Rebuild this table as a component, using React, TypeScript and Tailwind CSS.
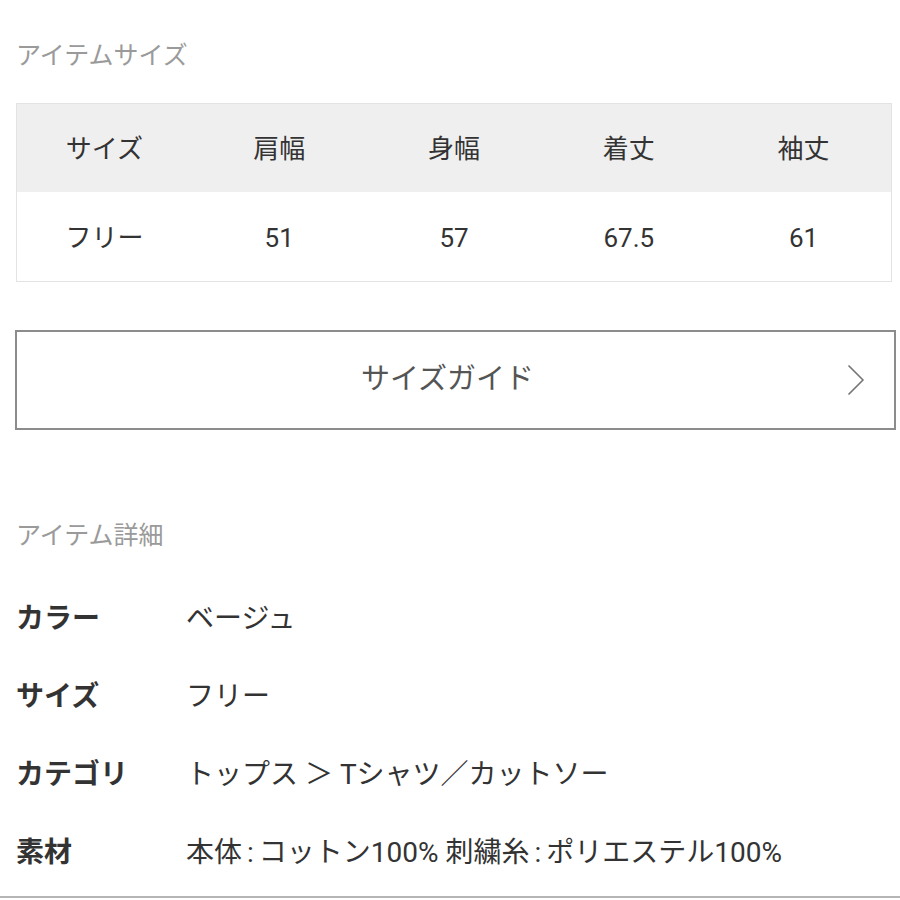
import { ChevronRight } from "lucide-react";
import type { ReactNode } from "react";

const font = { fontFamily: 'Roboto, "Noto Sans CJK JP", sans-serif' };

const headers = ["サイズ", "肩幅", "身幅", "着丈", "袖丈"];
const values = ["フリー", "51", "57", "67.5", "61"];

const Colon = () => <span className="mx-[5px]">:</span>;

const details: { label: string; value: ReactNode }[] = [
  { label: "カラー", value: "ベージュ" },
  { label: "サイズ", value: "フリー" },
  { label: "カテゴリ", value: "トップス ＞ Tシャツ／カットソー" },
  {
    label: "素材",
    value: (
      <>
        本体<Colon />コットン100% 刺繍糸<Colon />ポリエステル100%
      </>
    ),
  },
];

export default function App() {
  return (
    <div className="w-[900px] h-[900px] overflow-hidden bg-white" style={font}>
      <div className="pt-[40px] pl-4 text-[25px] leading-[32px] text-[#9a9a9a]">
        アイテムサイズ
      </div>

      <div className="mt-[31px] ml-4 w-[876px] border border-[#e3e3e3]">
        <div className="grid grid-cols-5 h-[88px] pt-[3px] items-center bg-[#efefef] text-[26px] text-[#333]">
          {headers.map((h) => (
            <div key={h} className="text-center">
              {h}
            </div>
          ))}
        </div>
        <div className="grid grid-cols-5 h-[89px] pt-[3px] items-center bg-white text-[26px] text-[#333]">
          {values.map((v) => (
            <div key={v} className="text-center">
              {v}
            </div>
          ))}
        </div>
      </div>

      <div className="relative mt-12 ml-[15px] w-[881px] h-[100px] border-2 border-[#8c8c8c] flex items-center justify-center pr-4">
        <span className="text-[29px] text-[#555]">サイズガイド</span>
        <ChevronRight
          className="absolute right-[10px] top-1/2 -translate-y-1/2 text-[#777]"
          size={56}
          strokeWidth={0.75}
        />
      </div>

      <div className="mt-[90px] pl-4 text-[25px] leading-[32px] text-[#9a9a9a]">
        アイテム詳細
      </div>

      <div className="mt-[28px] pl-4">
        {details.map((d) => (
          <div key={d.label} className="flex items-center h-[78px] text-[28px] text-[#333]">
            <div className="w-[170px] font-bold">{d.label}</div>
            <div>{d.value}</div>
          </div>
        ))}
      </div>

      <div className="mt-[4px] border-t-2 border-[#b5b5b5]" />
    </div>
  );
}
